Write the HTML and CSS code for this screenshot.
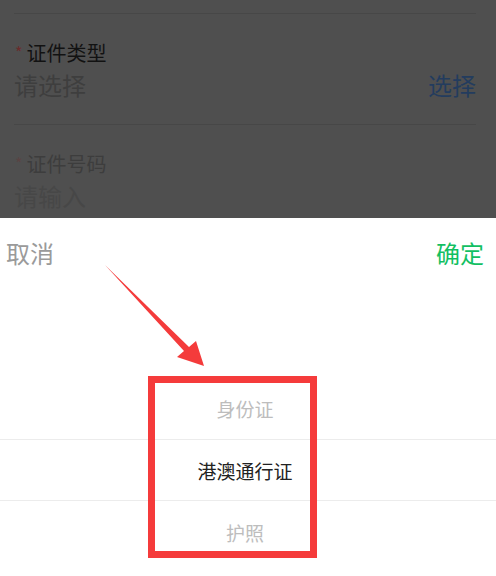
FILE: index.html
```html
<!DOCTYPE html>
<html lang="zh-CN">
<head>
    <meta charset="UTF-8">
    <meta name="viewport" content="width=device-width, initial-scale=1.0">
    <title>证件类型</title>
    <link rel="stylesheet" href="styles.css">
</head>
<body>
    <div id="page">
        <div class="form">
            <div class="field">
                <div class="label"><span class="star">*</span>证件类型</div>
                <div class="value">
                    <span class="placeholder">请选择</span>
                    <span class="pick">选择</span>
                </div>
            </div>
            <div class="field field-dim">
                <div class="label"><span class="star">*</span>证件号码</div>
                <div class="value">
                    <span class="placeholder">请输入</span>
                </div>
            </div>
        </div>

        <div class="sheet">
            <div class="toolbar">
                <span class="cancel">取消</span>
                <span class="confirm">确定</span>
            </div>
            <div class="picker">
                <div class="option">身份证</div>
                <div class="option selected">港澳通行证</div>
                <div class="option">护照</div>
            </div>

            <div class="highlight"></div>
            <svg class="arrow" width="110" height="110" viewBox="0 0 110 110">
                <polygon points="5,5 89,87 96,81 104,106 77,97 84,91" fill="#f43b3b"/>
            </svg>
        </div>
    </div>
</body>
</html>
```

FILE: styles.css
```css
* {
    box-sizing: border-box;
}

body {
    margin: 0;
    font-family: 'Noto Sans CJK SC', 'Noto Sans', sans-serif;
    background-color: #ffffff;
}

#page {
    display: flex;
    flex-direction: column;
    width: 496px;
    height: 576px;
    overflow: hidden;
}

/* dimmed form behind the sheet */
.form {
    height: 218px;
    padding-top: 13px;
    background-color: #4f4f4f;
    overflow: hidden;
}

.field {
    margin: 0 20px 0 14px;
    padding: 26px 0 23px;
    border-top: 1px solid #474747;
}

.label {
    font-size: 20px;
    line-height: 24px;
    color: #121212;
}

.star {
    color: #6b2b2b;
    font-size: 16px;
    margin: 0 4px 0 1px;
    vertical-align: 2px;
}

.value {
    display: flex;
    justify-content: space-between;
    margin-top: 4px;
    font-size: 24px;
    line-height: 32px;
}

.placeholder {
    color: #3e3e3e;
}

.pick {
    color: #233c5e;
}

.field-dim .label {
    color: #3d3d3d;
}

.field-dim .star {
    color: #5a4343;
}

.field-dim .value {
    margin-top: 4px;
}

.field-dim .placeholder {
    color: #474747;
}

/* bottom picker sheet */
.sheet {
    position: relative;
    flex: 1;
    background-color: #ffffff;
}

.toolbar {
    display: flex;
    justify-content: space-between;
    align-items: center;
    height: 68px;
    padding: 0 12px 0 6px;
    font-size: 24px;
}

.cancel {
    color: #9a9a9a;
}

.confirm {
    color: #12bf62;
}

.picker {
    padding-top: 91px;
}

.option {
    height: 62px;
    display: flex;
    align-items: center;
    justify-content: center;
    padding-right: 6px;
    font-size: 19px;
    color: #bdbdbd;
}

.option.selected {
    color: #222222;
    border-top: 1px solid #ececec;
    border-bottom: 1px solid #ececec;
}

.highlight {
    position: absolute;
    left: 148px;
    top: 158px;
    width: 169px;
    height: 182px;
    border: 7px solid #f53b3b;
}

.arrow {
    position: absolute;
    left: 100px;
    top: 42px;
}
```
